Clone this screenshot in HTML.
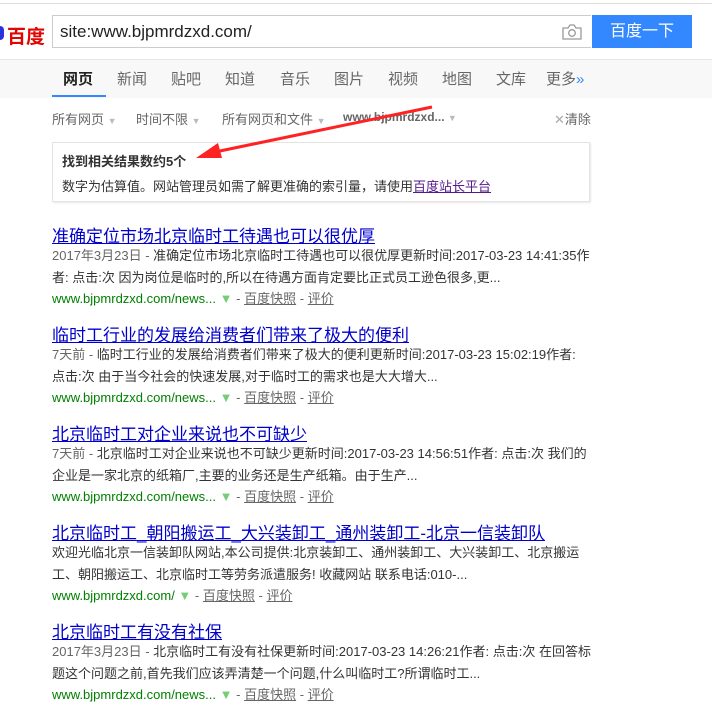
<!DOCTYPE html>
<html><head><meta charset="utf-8"><style>
body{margin:0;width:712px;height:722px;background:#fff;font-family:"Liberation Sans","Noto Sans CJK SC",sans-serif;position:relative;overflow:hidden}
.a{position:absolute;white-space:nowrap}
.t{font-size:17px;color:#00c;text-decoration:underline;left:52px}
.d{font-size:13px;color:#333;left:52px;line-height:22px}
.g{color:#666}
.u{font-size:13px;left:52px;color:#008000}
.u span{color:#666}
.u u{color:#666}
</style></head><body>
<div class="a" style="left:0;top:3px;width:712px;height:1px;background:#ddd"></div>
<div class="a" style="left:7px;top:22px;font-size:19px;font-weight:bold;color:#e10601">百度</div>
<div class="a" style="left:-5px;top:26px;width:9px;height:14px;border-radius:4px;background:#2932e1"></div>
<div class="a" style="left:52px;top:15px;width:538px;height:31px;border:1px solid #ccc;border-right:none"></div>
<div class="a" style="left:60px;top:22px;font-size:17px;color:#222">site:www.bjpmrdzxd.com/</div>
<svg class="a" style="left:562px;top:24px" width="20" height="16" viewBox="0 0 20 16"><path d="M1 4h5l2-3h4l2 3h5v11H1z" fill="none" stroke="#999" stroke-width="1.3"/><circle cx="10" cy="9" r="3.3" fill="none" stroke="#999" stroke-width="1.3"/></svg>
<div class="a" style="left:592px;top:15px;width:100px;height:33px;background:#3388ff;color:#fff;font-size:16px;line-height:33px;text-align:center">百度一下</div>
<div class="a" style="left:0;top:59px;width:712px;height:38px;background:#f8f8f8;border-top:1px solid #e6e6e6"></div>
<div class="a" style="left:52px;top:95px;width:54px;height:2px;background:#38f"></div>
<div class="a" style="top:68px;left:63px;font-size:15px;color:#222;font-weight:bold">网页</div>
<div class="a" style="top:68px;left:117px;font-size:15px;color:#666">新闻</div>
<div class="a" style="top:68px;left:171px;font-size:15px;color:#666">贴吧</div>
<div class="a" style="top:68px;left:225px;font-size:15px;color:#666">知道</div>
<div class="a" style="top:68px;left:280px;font-size:15px;color:#666">音乐</div>
<div class="a" style="top:68px;left:334px;font-size:15px;color:#666">图片</div>
<div class="a" style="top:68px;left:388px;font-size:15px;color:#666">视频</div>
<div class="a" style="top:68px;left:442px;font-size:15px;color:#666">地图</div>
<div class="a" style="top:68px;left:496px;font-size:15px;color:#666">文库</div>
<div class="a" style="top:68px;left:546px;font-size:15px;color:#666">更多<span style="color:#38f">»</span></div>
<div class="a" style="top:109px;left:52px;font-size:13px;color:#666">所有网页 <span style="color:#bbb;font-size:9px">▼</span></div>
<div class="a" style="top:109px;left:136px;font-size:13px;color:#666">时间不限 <span style="color:#bbb;font-size:9px">▼</span></div>
<div class="a" style="top:109px;left:222px;font-size:13px;color:#666">所有网页和文件 <span style="color:#bbb;font-size:9px">▼</span></div>
<div class="a" style="top:110px;left:343px;font-size:12px;color:#666;font-weight:bold">www.bjpmrdzxd... <span style="color:#bbb;font-size:9px;font-weight:normal">▼</span></div>
<div class="a" style="top:109px;left:554px;font-size:13px;color:#666"><span style="color:#aaa">✕</span>清除</div>
<div class="a" style="left:52px;top:142px;width:536px;height:58px;border:1px solid #e3e3e3;box-shadow:1px 1px 2px #e8e8e8"></div>
<div class="a" style="left:62px;top:151px;font-size:13px;font-weight:bold;color:#333">找到相关结果数约5个</div>
<div class="a" style="left:62px;top:176px;font-size:13px;color:#333">数字为估算值。网站管理员如需了解更准确的索引量，请使用<u style="color:#551a8b">百度站长平台</u></div>
<svg class="a" style="left:0;top:0" width="712" height="200"><path d="M432 107 L215 152" stroke="#f22" stroke-width="3"/><path d="M196 158 L218 143 L222 158Z" fill="#f22"/></svg>

<div class="a t" style="top:222px">准确定位市场北京临时工待遇也可以很优厚</div>
<div class="a d" style="top:245px"><span class="g">2017年3月23日 - </span>准确定位市场北京临时工待遇也可以很优厚更新时间:2017-03-23 14:41:35作<br>者: 点击:次 因为岗位是临时的,所以在待遇方面肯定要比正式员工逊色很多,更...</div>
<div class="a u" style="top:288px">www.bjpmrdzxd.com/news... <span style="color:#7c7">▼</span> <span>-</span> <u>百度快照</u> <span>-</span> <u>评价</u></div>

<div class="a t" style="top:321px">临时工行业的发展给消费者们带来了极大的便利</div>
<div class="a d" style="top:344px"><span class="g">7天前 - </span>临时工行业的发展给消费者们带来了极大的便利更新时间:2017-03-23 15:02:19作者:<br>点击:次 由于当今社会的快速发展,对于临时工的需求也是大大增大...</div>
<div class="a u" style="top:387px">www.bjpmrdzxd.com/news... <span style="color:#7c7">▼</span> <span>-</span> <u>百度快照</u> <span>-</span> <u>评价</u></div>

<div class="a t" style="top:420px">北京临时工对企业来说也不可缺少</div>
<div class="a d" style="top:443px"><span class="g">7天前 - </span>北京临时工对企业来说也不可缺少更新时间:2017-03-23 14:56:51作者: 点击:次 我们的<br>企业是一家北京的纸箱厂,主要的业务还是生产纸箱。由于生产...</div>
<div class="a u" style="top:486px">www.bjpmrdzxd.com/news... <span style="color:#7c7">▼</span> <span>-</span> <u>百度快照</u> <span>-</span> <u>评价</u></div>

<div class="a t" style="top:519px">北京临时工_朝阳搬运工_大兴装卸工_通州装卸工-北京一信装卸队</div>
<div class="a d" style="top:542px">欢迎光临北京一信装卸队网站,本公司提供:北京装卸工、通州装卸工、大兴装卸工、北京搬运<br>工、朝阳搬运工、北京临时工等劳务派遣服务! 收藏网站 联系电话:010-...</div>
<div class="a u" style="top:585px">www.bjpmrdzxd.com/ <span style="color:#7c7">▼</span> <span>-</span> <u>百度快照</u> <span>-</span> <u>评价</u></div>

<div class="a t" style="top:618px">北京临时工有没有社保</div>
<div class="a d" style="top:641px"><span class="g">2017年3月23日 - </span>北京临时工有没有社保更新时间:2017-03-23 14:26:21作者: 点击:次 在回答标<br>题这个问题之前,首先我们应该弄清楚一个问题,什么叫临时工?所谓临时工...</div>
<div class="a u" style="top:684px">www.bjpmrdzxd.com/news... <span style="color:#7c7">▼</span> <span>-</span> <u>百度快照</u> <span>-</span> <u>评价</u></div>
</body></html>
